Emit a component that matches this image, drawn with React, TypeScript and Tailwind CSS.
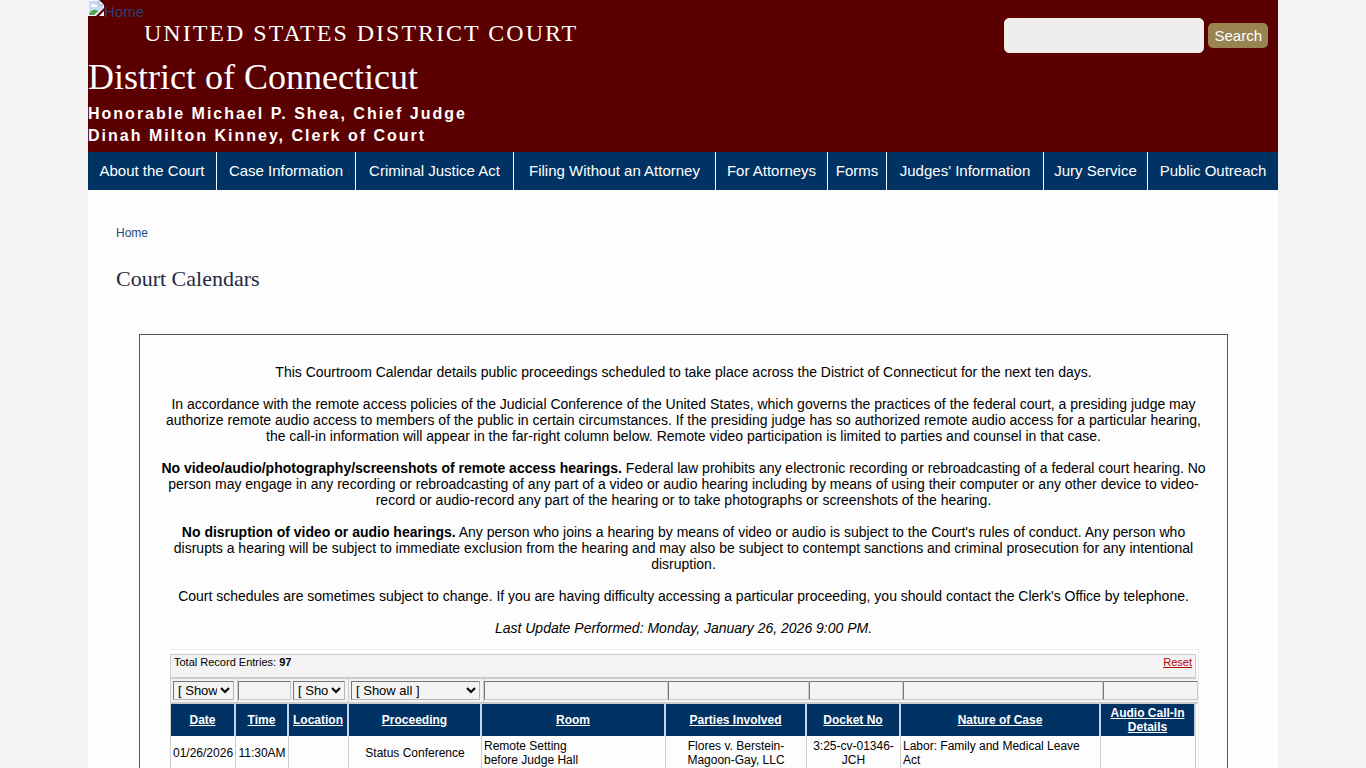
import React from 'react';

const navLinks = [
  'About the Court',
  'Case Information',
  'Criminal Justice Act',
  'Filing Without an Attorney',
  'For Attorneys',
  'Forms',
  "Judges' Information",
  'Jury Service',
  'Public Outreach',
];

const columns = [
  { label: 'Date', width: 'w-[65px]' },
  { label: 'Time', width: 'w-[53px]' },
  { label: 'Location', width: 'w-[60px]' },
  { label: 'Proceeding', width: 'w-[133px]' },
  { label: 'Room', width: 'w-[184px]' },
  { label: 'Parties Involved', width: 'w-[141px]' },
  { label: 'Docket No', width: 'w-[94px]' },
  { label: 'Nature of Case', width: 'w-[200px]' },
  { label: 'Audio Call-In Details', width: 'w-[95px]' },
];

const hearings = [
  {
    date: '01/26/2026',
    time: '11:30AM',
    location: '',
    proceeding: 'Status Conference',
    room: ['Remote Setting', 'before Judge Hall'],
    parties: 'Flores v. Berstein-Magoon-Gay, LLC',
    docket: '3:25-cv-01346-JCH',
    nature: 'Labor: Family and Medical Leave Act',
    audio: '',
  },
];

const FilterSelect = ({ label }: { label: string }) => (
  <div className="border-r border-[#cccccc] py-[2px] pr-[3px] pl-[2px]">
    <select
      aria-label={label}
      className="block h-[19px] w-full border border-t-[#767676] border-r-[#b5b5b5] border-b-[#b5b5b5] border-l-[#767676] bg-[#f3f3f3] text-[13px] text-black"
    >
      <option>[ Show all ]</option>
    </select>
  </div>
);

const FilterInput = ({ label }: { label: string }) => (
  <input
    type="text"
    aria-label={label}
    className="my-[2px] block h-[19px] w-full min-w-0 border border-t-[#767676] border-r-[#cccccc] border-b-[#cccccc] border-l-[#767676] bg-[#f3f3f3] px-1 text-[13px] outline-none"
  />
);

const BrokenImage = () => (
  <svg width="16" height="16" viewBox="0 0 16 16" aria-hidden="true" className="shrink-0">
    <path d="M0 0h11l5 5v3L8 16H0z" fill="#f4f6fa" />
    <path d="M1 1h10v4h4v3L7 15H1z" fill="#c3d9f6" />
    <path d="M3 6c0-2 3-3 4-1 2-1 3 1 2 2H3z" fill="#ffffff" />
    <path d="M1 15c1-4 5-7 9-4l-4 4z" fill="#4fa54a" />
    <path d="M11 0v5h5z" fill="#ffffff" stroke="#9aa3b0" />
    <path d="M16 11v5h-5z" fill="#f4f6fa" />
  </svg>
);

const Header = () => (
  <header className="flex items-start justify-between bg-[#5b0000] text-white">
    <div>
      <a href="#" className="flex h-5 items-start text-[15px] leading-6 text-[#2b3f73]">
        <BrokenImage />
        Home
      </a>
      <p className="pl-14 font-['Liberation_Serif',serif] text-[24px] leading-[26px] tracking-[2px]">
        UNITED STATES DISTRICT COURT
      </p>
      <p className="pt-[13px] pb-2 font-['Liberation_Serif',serif] text-[36px] leading-9">
        District of Connecticut
      </p>
      <div className="pb-[5px] text-[16px] leading-[22px] font-bold tracking-[2px]">
        <p>Honorable Michael P. Shea, Chief Judge</p>
        <p>Dinah Milton Kinney, Clerk of Court</p>
      </div>
    </div>
    <form className="flex items-center gap-1 pt-[18px] pr-[10px]">
      <input
        type="text"
        aria-label="Search this site"
        className="h-[35px] w-[200px] rounded-[5px] border border-[#f3e6dc] bg-[#eeeeee] px-2 text-[16px] text-black"
      />
      <button type="button" className="h-[25px] rounded-[5px] bg-[#998351] px-[6px] text-[15px] leading-[25px]">
        Search
      </button>
    </form>
  </header>
);

const Notice = () => (
  <div className="space-y-4 px-[18px] text-center text-[14px] leading-4 text-black">
    <p>
      This Courtroom Calendar details public proceedings scheduled to take place across the District of
      Connecticut for the next ten days.
    </p>
    <p>
      In accordance with the remote access policies of the Judicial Conference of the United States, which
      governs the practices of the federal court, a presiding judge may authorize remote audio access to members
      of the public in certain circumstances. If the presiding judge has so authorized remote audio access for a
      particular hearing, the call-in information will appear in the far-right column below. Remote video
      participation is limited to parties and counsel in that case.
    </p>
    <p>
      <strong>No video/audio/photography/screenshots of remote access hearings.</strong> Federal law prohibits
      any electronic recording or rebroadcasting of a federal court hearing. No person may engage in any
      recording or rebroadcasting of any part of a video or audio hearing including by means of using their
      computer or any other device to video-record or audio-record any part of the hearing or to take
      photographs or screenshots of the hearing.
    </p>
    <p>
      <strong>No disruption of video or audio hearings.</strong> Any person who joins a hearing by means of
      video or audio is subject to the Court's rules of conduct. Any person who disrupts a hearing will be
      subject to immediate exclusion from the hearing and may also be subject to contempt sanctions and criminal
      prosecution for any intentional disruption.
    </p>
    <p>
      Court schedules are sometimes subject to change. If you are having difficulty accessing a particular
      proceeding, you should contact the Clerk's Office by telephone.
    </p>
    <p className="italic">Last Update Performed: Monday, January 26, 2026 9:00 PM.</p>
  </div>
);

const Calendar = () => (
  <div className="mr-7 ml-[30px] mt-[13px] border-t border-r border-[#ededed] pt-1 text-black">
    <div className="border-l border-[#cccccc]">
      {/* Record count */}
      <div className="mr-[2px] flex h-[25px] items-start justify-between border-t border-r border-b-2 border-[#cccccc] bg-[#f3f3f3] px-[3px] text-[11px] leading-[15px]">
        <p>
          Total Record Entries: <b>97</b>
        </p>
        <a href="#" className="text-[#b80000] underline">
          Reset
        </a>
      </div>

      {/* Column filters */}
      <div className="grid grid-cols-[67fr_53fr_58fr_135fr_184fr_141fr_94fr_200fr_95fr] border-b-2 border-[#cccccc] bg-[#f3f3f3]">
        <FilterSelect label="Filter by date" />
        <FilterInput label="Filter by time" />
        <FilterSelect label="Filter by location" />
        <FilterSelect label="Filter by proceeding" />
        <FilterInput label="Filter by room" />
        <FilterInput label="Filter by parties" />
        <FilterInput label="Filter by docket number" />
        <FilterInput label="Filter by nature of case" />
        <FilterInput label="Filter by audio details" />
      </div>

      <div className="pr-[2px]">
        <table className="w-full table-fixed border-separate border-spacing-0 text-[12px] leading-[14px]">
          <thead>
            <tr className="bg-[#003263] text-white">
              {columns.map((column) => (
                <th
                  key={column.label}
                  className={`h-8 border-r-2 border-[#c6d6ea] p-0 font-bold ${column.width}`}
                >
                  <a href="#" className="underline">
                    {column.label}
                  </a>
                </th>
              ))}
            </tr>
          </thead>
          <tbody className="[&_td]:border-r [&_td]:border-[#cccccc] [&_td]:px-[2px] [&_td]:py-[3px] [&_td]:text-center">
            {hearings.map((hearing) => (
              <tr key={hearing.docket}>
                <td>{hearing.date}</td>
                <td>{hearing.time}</td>
                <td>{hearing.location}</td>
                <td>{hearing.proceeding}</td>
                <td>
                  <div className="text-left">
                    {hearing.room.map((line) => (
                      <p key={line}>{line}</p>
                    ))}
                  </div>
                </td>
                <td>{hearing.parties}</td>
                <td>{hearing.docket}</td>
                <td>
                  <p className="text-left">{hearing.nature}</p>
                </td>
                <td>{hearing.audio}</td>
              </tr>
            ))}
          </tbody>
        </table>
      </div>
    </div>
  </div>
);

export default function App() {
  return (
    <div className="min-h-screen bg-[#f3f3f3] px-[88px] font-['Liberation_Sans',Arial,sans-serif]">
      <div className="mx-auto min-h-screen max-w-[1190px] bg-[#fdfdfd]">
        <Header />
        <nav className="grid grid-cols-[129fr_139fr_158fr_202fr_112fr_59fr_157fr_104fr_130fr] divide-x divide-white bg-[#003263]">
          {navLinks.map((link) => (
            <a
              key={link}
              href="#"
              className="text-center text-[15px] leading-[38px] whitespace-nowrap text-white"
            >
              {link}
            </a>
          ))}
        </nav>

        <main className="px-7 pt-[34px]">
          <a href="#" className="block text-[12px] leading-[18px] text-[#26477e]">
            Home
          </a>
          <h1 className="pt-6 font-['Liberation_Serif',serif] text-[22px] leading-[26px] text-[#1f2a44]">
            Court Calendars
          </h1>
          <section className="mt-[42px] mr-[22px] ml-[23px] border-x border-t border-[#555555] pt-[29px]">
            <Notice />
            <Calendar />
          </section>
        </main>
      </div>
    </div>
  );
}
